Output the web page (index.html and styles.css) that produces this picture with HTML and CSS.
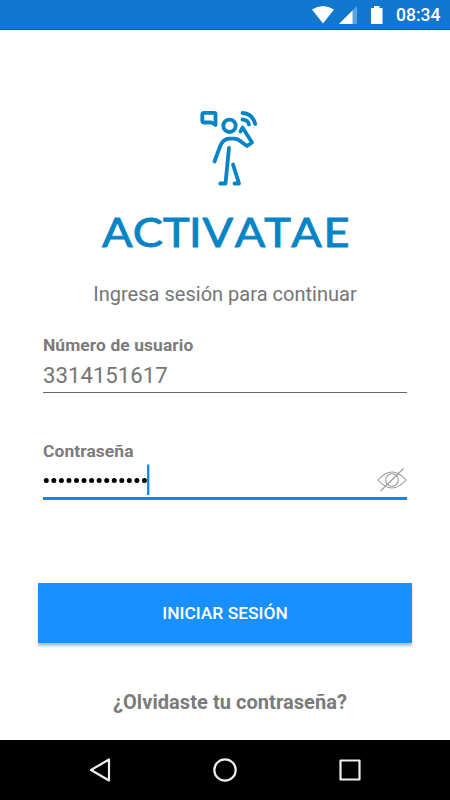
FILE: index.html
```html
<!DOCTYPE html>
<html lang="es">
<head>
<meta charset="utf-8">
<title>Activatae</title>
<link rel="stylesheet" href="styles.css">
</head>
<body>
<div class="screen">
  <header class="status">
    <svg class="status-icons" width="86" height="30" viewBox="0 0 86 30">
      <path d="M2 9.500Q13 2.500 24 9.500L13 23.500Z" fill="#fff"/>
      <path d="M47 6V24H29Z" fill="#5ca2df"/>
      <path d="M42.500 10.500V24H29Z" fill="#fff"/>
      <path d="M61 8H64V6H69.500V8H72.500V24H61Z" fill="#fff"/>
    </svg>
    <span class="clock">08:34</span>
  </header>
  <main class="content">
    <svg class="logo" width="260" height="150" viewBox="95 105 260 150">
      <g fill="none" stroke="#0784c6" stroke-width="3.800" stroke-linecap="round" stroke-linejoin="round">
        <path d="M215.500 125V114Q215.500 112.800 214.300 112.800H204Q202.300 112.800 202.300 114.500V120.500Q202.300 122.500 204.300 122.500H211.500Z"/>
        <circle cx="229.500" cy="125.800" r="6.200"/>
        <path d="M214.500 161.500L220 146.500Q223 138.800 229.500 138.700H234Q238 138.800 241.500 142L247 146L252 142.500L242.500 127.500L240.500 131.500"/>
        <path d="M229 148L225.500 183.500H220.200M233 164.500L239 183.500H234.500"/>
        <path d="M242.500 113Q252.500 113.500 255.200 124M242.500 119.500Q248 120 249 124.500"/>
      </g>
      <g class="wordmark" transform="scale(1.1 1)">
        <text y="247.500" x="92.700 120.700 148.200 171.800 184 213.500 240.200 264.700 294">ACTIVATAE</text>
      </g>
    </svg>
    <p class="intro">Ingresa sesión para continuar</p>
    <section class="field user">
      <span class="label">Número de usuario</span>
      <span class="value">3314151617</span>
    </section>
    <section class="field password">
      <span class="label">Contraseña</span>
      <div class="entry">
        <svg width="108" height="32" viewBox="0 0 108 32">
          <path d="M3.300 16.500H102" fill="none" stroke="#000" stroke-width="5" stroke-linecap="round" stroke-dasharray="0 7.550"/>
          <path d="M105.200 0.500V31" stroke="#0a88fb" stroke-width="2.300"/>
        </svg>
        <svg class="eye" width="30" height="32" viewBox="0 0 30 32" fill="none" stroke="#999" stroke-width="1.100">
          <path d="M1 16Q8 8 15 8T29 16Q22 24 15 24T1 16Z"/>
          <circle cx="15" cy="16" r="6.300"/>
          <path d="M3.500 27L26.500 4.500" />
        </svg>
      </div>
    </section>
    <div class="button">INICIAR SESIÓN</div>
    <p class="forgot">¿Olvidaste tu contraseña?</p>
  </main>
  <nav class="nav">
    <svg width="450" height="60" viewBox="0 0 450 60" fill="none" stroke="#eee" stroke-width="2.200" stroke-linejoin="round">
      <path d="M109 19.500V40.500L91 30Z"/>
      <circle cx="225" cy="30" r="10.700"/>
      <rect x="340.500" y="20.500" width="19" height="19"/>
    </svg>
  </nav>
</div>
</body>
</html>
```

FILE: styles.css
```css
* { box-sizing: border-box; }
body { margin: 0; font-family: Roboto, "Liberation Sans", sans-serif; background: #fff; }
p { margin: 0; }
svg { display: block; }
.screen { width: 450px; height: 800px; display: flex; flex-direction: column; }
.status { height: 30px; background: #1277d1; border-bottom: 1px solid #0960bd; display: flex; justify-content: flex-end; padding-right: 9px; }
.status-icons { flex: none; }
.clock { width: 45px; color: #fff; font-size: 17.5px; font-weight: 500; line-height: 31px; white-space: nowrap; }
.content { flex: 1; display: flex; flex-direction: column; align-items: center; color: #757575; }
.logo { margin-top: 75px; }
.wordmark { font-family: Lato, sans-serif; font-size: 41px; font-weight: 400; fill: #0784c6; stroke: #0784c6; stroke-width: 0.9px; }
.intro { margin-top: 27px; height: 24px; line-height: 24px; font-size: 20px; letter-spacing: 0.02px; }
.field { width: 364px; display: flex; flex-direction: column; }
.user { margin-top: 29px; height: 58px; border-bottom: 1px solid #666; }
.label { font-size: 17.4px; font-weight: 700; line-height: 20px; letter-spacing: 0.1px; color: #7b7b7b; }
.value { font-size: 22.2px; line-height: 28px; margin-top: 6px; }
.password { margin-top: 48px; height: 59px; border-bottom: 3px solid #0a88fb; }
.entry { display: flex; justify-content: space-between; margin-top: 3px; }
.button { width: 374px; height: 60px; margin-top: 83px; background: #1890ff; box-shadow: 0 3px 2px rgba(0, 0, 0, 0.25); color: #fff; font-size: 17.4px; font-weight: 500; line-height: 61px; text-align: center; }
.forgot { margin: 47px 0 0 10px; font-size: 20px; font-weight: 700; line-height: 24px; letter-spacing: 0.06px; color: #7b7b7b; }
.nav { height: 60px; background: #000; }
```
